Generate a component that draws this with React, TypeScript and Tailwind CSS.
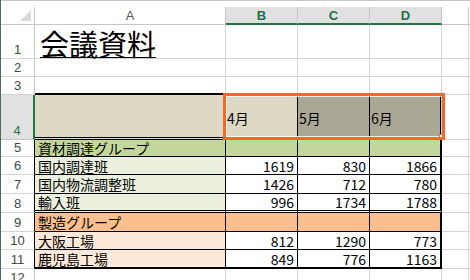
import React from "react";

const grid = "border-r border-b border-[#d4d4d4]";
const tb = "border-r border-b border-black";
const tbD = "border-r-2 border-b border-black";
const jp = "font-['Noto_Sans_CJK_JP',sans-serif] text-[14px] leading-none text-black";
const hdrFont = "font-['Liberation_Sans',sans-serif] text-[13px] leading-none";

const colW = ["w-[191px]", "w-[72px]", "w-[72px]", "w-[72px]", "w-[27px]"];

type CellSpec = { cls?: string; text?: string; right?: boolean };

// one worksheet row: row header + A..F
const Row = ({
  h,
  num,
  hdrCls,
  cells,
  children,
}: {
  h: string;
  num: number;
  hdrCls?: string;
  cells: CellSpec[];
  children?: React.ReactNode;
}) => (
  <div className={`relative flex ${h}`}>
    <div
      className={`w-[34px] shrink-0 flex items-end justify-center pb-[2px] ${hdrFont} ${
        hdrCls ?? "border-r border-b border-r-[#c6c6c6] border-b-[#d4d4d4] text-[#444]"
      }`}
    >
      {num}
    </div>
    {cells.map((c, i) => (
      <div
        key={i}
        className={`${i < 5 ? colW[i] : "flex-1"} shrink-0 flex items-center ${
          c.right ? "justify-end pr-[3px]" : "pl-[3px]"
        } ${jp} ${c.cls ?? grid}`}
      >
        {c.text}
      </div>
    ))}
    {children}
  </div>
);

const empty = (): CellSpec[] => [{}, {}, {}, {}, {}, {}];

const dataRow = (label: string, a: string, nums: string[], dbl?: boolean): CellSpec[] => {
  const b = dbl ? "border-b-[3px] border-double" : "";
  return [
    { cls: `${tb} ${b} ${a}`, text: label },
    { cls: `${tb} ${b} bg-white`, text: nums[0], right: true },
    { cls: `${tb} ${b} bg-white`, text: nums[1], right: true },
    { cls: `${tbD} ${b} bg-white`, text: nums[2], right: true },
    {},
    {},
  ];
};

const bandRow = (label: string, bg: string, dbl?: boolean): CellSpec[] => {
  const b = dbl ? "border-b-[3px] border-double" : "";
  return [
    { cls: `${tb} ${b} ${bg}`, text: label },
    { cls: `${tb} ${b} ${bg}` },
    { cls: `${tb} ${b} ${bg}` },
    { cls: `${tbD} ${b} ${bg}` },
    {},
    {},
  ];
};

const tblHdr = "border-r border-b border-r-black border-b-[#d4d4d4] text-[#444]";

export default function App() {
  const colHdr = [
    { l: "A", sel: false },
    { l: "B", sel: true },
    { l: "C", sel: true },
    { l: "D", sel: true },
    { l: "", sel: false },
  ];
  const month = "border-r border-b-[3px] border-double border-black";
  return (
    <div className="w-[470px] h-[280px] overflow-hidden bg-white border-l border-[#4d6b5a]">
      {/* column headers */}
      <div className="flex h-[25px] border-t border-[#c6c6c6]">
        <div className="w-[34px] shrink-0 flex flex-col border-b border-[#c6c6c6]">
          <div className="h-[6px]" />
          <div className="flex-1 border-r border-[#c6c6c6]">
            <svg width="11" height="11" className="ml-[19px] mt-[3px]">
              <polygon points="11,0 11,11 0,11" fill="#dadada" />
            </svg>
          </div>
        </div>
        {colHdr.map((c, i) => (
          <div key={i} className={`${colW[i]} shrink-0 flex flex-col`}>
            <div className="h-[6px]" />
            <div
              className={`flex-1 flex items-center justify-center border-r border-[#c6c6c6] ${hdrFont} ${
                c.sel
                  ? "bg-[#e1e1e1] text-[#217346] border-b-2 border-b-[#217346] font-bold"
                  : "text-[#555] border-b"
              }`}
            >
              {c.l}
            </div>
          </div>
        ))}
        <div className="flex-1 border-b border-[#c6c6c6]" />
      </div>

      {/* row 1: title */}
      <Row
        h="h-[34px]"
        num={1}
        cells={[
          {
            cls: `${grid} !items-end pb-[1px] !pl-[4px]`,
            text: "",
          },
          {},
          {},
          {},
          {},
          {},
        ]}
      >
        <div className="absolute left-[39px] bottom-[1px] font-['Noto_Sans_CJK_JP',sans-serif] text-[29px] leading-none text-black underline decoration-1 underline-offset-[1px]">
          会議資料
        </div>
      </Row>
      <Row h="h-[18px]" num={2} cells={empty()} />
      <Row
        h="h-[18px]"
        num={3}
        cells={[
          { cls: "border-r border-b-2 border-r-[#d4d4d4] border-b-black" },
          { cls: "border-r border-b-2 border-r-[#d4d4d4] border-b-black" },
          { cls: "border-r border-b-2 border-r-[#d4d4d4] border-b-black" },
          { cls: "border-r border-b-2 border-r-[#d4d4d4] border-b-black" },
          {},
          {},
        ]}
      />

      {/* row 4: months, selected */}
      <Row
        h="h-[45px]"
        num={4}
        hdrCls="bg-[#e1e1e1] text-[#217346] border-r-2 border-b border-r-[#217346] border-b-[#c6c6c6]"
        cells={[
          { cls: `${month} bg-[#ddd9c4]` },
          { cls: `${month} bg-[#ddd9c4] !pl-[1px] pt-[3px]`, text: "4月" },
          { cls: `${month} bg-[#aaa795] !pl-[1px] pt-[3px]`, text: "5月" },
          { cls: `border-r-2 border-b-[3px] border-double border-black bg-[#aaa795] !pl-[1px] pt-[3px]`, text: "6月" },
          {},
          {},
        ]}
      >
        <div className="absolute left-[222px] top-[-2px] w-[222px] h-[47px] border-[3px] border-[#f0682a] z-10">
          <div className="w-full h-full border border-white/80" />
          <div className="absolute right-[-1px] bottom-[-1px] w-[4px] h-[4px] bg-white border border-[#f0682a]" />
        </div>
      </Row>

      <Row h="h-[17px]" num={5} hdrCls={tblHdr} cells={bandRow("資材調達グループ", "bg-[#c4d79b]")} />
      <Row h="h-[18px]" num={6} hdrCls={tblHdr} cells={dataRow("国内調達班", "bg-[#ebf1de]", ["1619", "830", "1866"])} />
      <Row h="h-[19px]" num={7} hdrCls={tblHdr} cells={dataRow("国内物流調整班", "bg-[#ebf1de]", ["1426", "712", "780"])} />
      <Row h="h-[19px]" num={8} hdrCls={tblHdr} cells={dataRow("輸入班", "bg-[#ebf1de]", ["996", "1734", "1788"], true)} />
      <Row h="h-[19px]" num={9} hdrCls={tblHdr} cells={bandRow("製造グループ", "bg-[#fabf8f]")} />
      <Row h="h-[18px]" num={10} hdrCls={tblHdr} cells={dataRow("大阪工場", "bg-[#fde9d9]", ["812", "1290", "773"])} />
      <Row
        h="h-[19px]"
        num={11}
        hdrCls={tblHdr}
        cells={dataRow("鹿児島工場", "bg-[#fde9d9]", ["849", "776", "1163"]).map((c, i) =>
          i < 4 ? { ...c, cls: `${c.cls} !border-b-2` } : c
        )}
      />
      <Row h="h-[18px]" num={12} cells={empty()} />
    </div>
  );
}
